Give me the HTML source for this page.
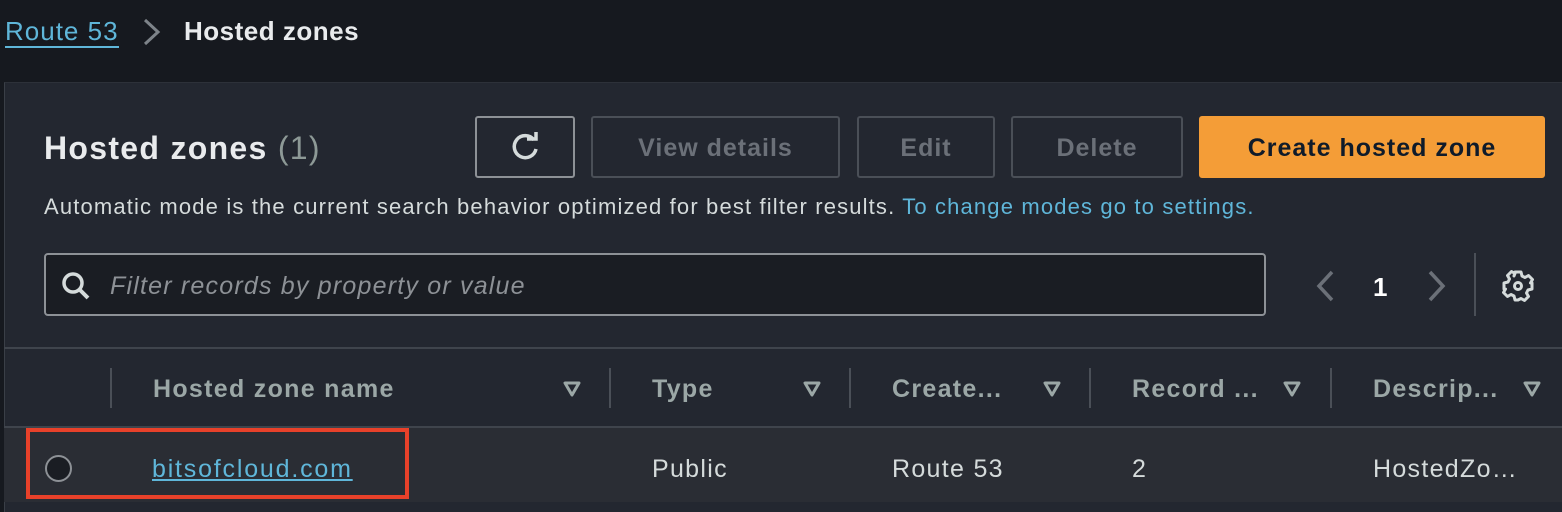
<!DOCTYPE html>
<html><head><meta charset="utf-8"><style>
*{margin:0;padding:0;box-sizing:border-box}
body{width:1562px;height:502px;background:#16191f;font-family:"Liberation Sans",sans-serif;position:relative;overflow:hidden;color:#d1d5db;letter-spacing:1.3px}
.a{position:absolute}
.panel{left:4px;top:82px;width:1560px;height:430px;background:#232730;border-left:1px solid #3a3f47;border-top:1px solid #2d3139}
.btn{position:absolute;top:116px;height:62px;border:2px solid #4a4f57;border-radius:3px;color:#6b7078;font-weight:bold;font-size:25px;display:flex;align-items:center;justify-content:center;padding-top:3px;letter-spacing:1px}
.th{position:absolute;top:375px;font-weight:bold;font-size:25px;color:#9ba7a6}
.sep{position:absolute;top:368px;width:2px;height:40px;background:#4a4f57}
.tri{position:absolute;top:380px}
.td{position:absolute;top:455px;font-size:25px;color:#d5dbdb}
</style></head><body>
<div class="a" style="left:5px;top:16px;font-size:26px;color:#5fb6d9;border-bottom:2px solid #5fb6d9;line-height:30px;letter-spacing:1px">Route 53</div>
<svg class="a" style="left:140px;top:17px" width="24" height="30"><path d="M5 3 L18 15 L5 27" stroke="#7d8389" stroke-width="3" fill="none"/></svg>
<div class="a" style="left:184px;top:16px;font-size:26px;font-weight:bold;color:#e9ebed;line-height:30px;letter-spacing:0.5px">Hosted zones</div>
<div class="a panel"></div>
<div class="a" style="left:44px;top:130px;font-size:32px;font-weight:bold;color:#e9ebed">Hosted zones <span style="font-weight:normal;color:#8d9996">(1)</span></div>
<div class="btn" style="left:475px;width:100px;border-color:#8d9196;padding-top:0"><svg width="36" height="36" viewBox="0 0 36 36"><path d="M27 11 A11 11 0 1 0 29 20" stroke="#d5dbdb" stroke-width="3.5" fill="none"/><path d="M20 10 L29 10 L29 3" stroke="#d5dbdb" stroke-width="3.5" fill="none"/></svg></div>
<div class="btn" style="left:591px;width:249px">View details</div>
<div class="btn" style="left:857px;width:138px">Edit</div>
<div class="btn" style="left:1011px;width:172px">Delete</div>
<div class="btn" style="left:1199px;width:346px;background:#f49d37;border-color:#f49d37;color:#0f1b2a">Create hosted zone</div>
<div class="a" style="left:44px;top:194px;font-size:22px;color:#d5dbdb;letter-spacing:1.15px">Automatic mode is the current search behavior optimized for best filter results. <span style="color:#5fb6d9">To change modes go to settings.</span></div>
<div class="a" style="left:44px;top:253px;width:1222px;height:63px;background:#1a1d23;border:2px solid #8d9196;border-radius:4px"></div>
<svg class="a" style="left:60px;top:270px" width="32" height="32"><circle cx="13" cy="13" r="9" stroke="#d5dbdb" stroke-width="3.5" fill="none"/><path d="M19.5 19.5 L28 28" stroke="#d5dbdb" stroke-width="4"/></svg>
<div class="a" style="left:110px;top:272px;font-size:25px;font-style:italic;color:#8d9196;letter-spacing:1.2px">Filter records by property or value</div>
<svg class="a" style="left:1310px;top:268px" width="30" height="36"><path d="M22 4 L9 18 L22 32" stroke="#6b7078" stroke-width="3.5" fill="none"/></svg>
<div class="a" style="left:1373px;top:272px;font-size:26px;font-weight:bold;color:#fff">1</div>
<svg class="a" style="left:1422px;top:268px" width="30" height="36"><path d="M8 4 L21 18 L8 32" stroke="#6b7078" stroke-width="3.5" fill="none"/></svg>
<div class="a" style="left:1474px;top:253px;width:2px;height:63px;background:#4a4f57"></div>
<svg class="a" style="left:1500px;top:268px" width="36" height="36" viewBox="0 0 36 36"><path d="M15 4h6l1 4 3 1.5 3.5-2 4 4-2 3.5L32 15v6l-4 1-1.5 3 2 3.5-4 4-3.5-2L18 32h-3l-1-4-3-1.5-3.5 2-4-4 2-3.5L4 21v-6l4-1 1.5-3-2-3.5 4-4 3.5 2L14 8z" stroke="#d5dbdb" stroke-width="3" fill="none" stroke-linejoin="round"/><circle cx="18" cy="18" r="3.5" stroke="#d5dbdb" stroke-width="3" fill="none"/></svg>
<div class="a" style="left:4px;top:347px;width:1558px;height:2px;background:#3f444c"></div>
<div class="sep" style="left:110px"></div>
<div class="th" style="left:153px">Hosted zone name</div>
<svg class="tri" style="left:562px" width="20" height="18"><path d="M3 3 L17 3 L10 15 Z" stroke="#9ba7a6" stroke-width="3" fill="none" stroke-linejoin="round"/></svg>
<div class="sep" style="left:609px"></div>
<div class="th" style="left:652px">Type</div>
<svg class="tri" style="left:802px" width="20" height="18"><path d="M3 3 L17 3 L10 15 Z" stroke="#9ba7a6" stroke-width="3" fill="none" stroke-linejoin="round"/></svg>
<div class="sep" style="left:849px"></div>
<div class="th" style="left:892px">Create...</div>
<svg class="tri" style="left:1042px" width="20" height="18"><path d="M3 3 L17 3 L10 15 Z" stroke="#9ba7a6" stroke-width="3" fill="none" stroke-linejoin="round"/></svg>
<div class="sep" style="left:1089px"></div>
<div class="th" style="left:1132px">Record ...</div>
<svg class="tri" style="left:1282px" width="20" height="18"><path d="M3 3 L17 3 L10 15 Z" stroke="#9ba7a6" stroke-width="3" fill="none" stroke-linejoin="round"/></svg>
<div class="sep" style="left:1330px"></div>
<div class="th" style="left:1373px">Descrip...</div>
<svg class="tri" style="left:1522px" width="20" height="18"><path d="M3 3 L17 3 L10 15 Z" stroke="#9ba7a6" stroke-width="3" fill="none" stroke-linejoin="round"/></svg>
<div class="a" style="left:4px;top:426px;width:1558px;height:2px;background:#3f444c"></div>
<div class="a" style="left:4px;top:428px;width:1558px;height:74px;background:#2a2d34"></div>
<div class="a" style="left:26px;top:428px;width:383px;height:71px;border:4px solid #e8412a"></div>
<div class="a" style="left:45px;top:455px;width:27px;height:27px;border:2px solid #8d9196;border-radius:50%;background:#1a1d23"></div>
<div class="td" style="left:152px;color:#5fb6d9;text-decoration:underline;letter-spacing:1.8px">bitsofcloud.com</div>
<div class="td" style="left:652px">Public</div>
<div class="td" style="left:892px">Route 53</div>
<div class="td" style="left:1132px">2</div>
<div class="td" style="left:1373px">HostedZo…</div>
</body></html>
